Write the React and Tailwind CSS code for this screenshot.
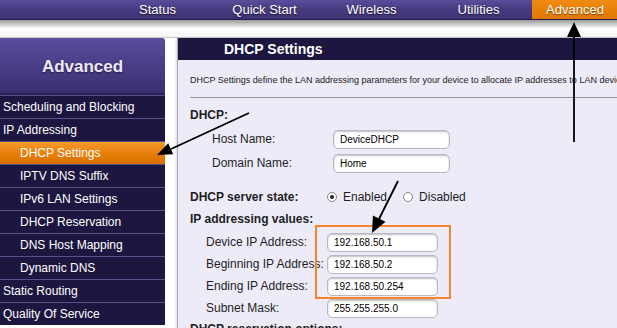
import React from "react";

const tabs = ["Status", "Quick Start", "Wireless", "Utilities"];

const menu = [
  { label: "Scheduling and Blocking" },
  { label: "IP Addressing" },
  { label: "DHCP Settings", sub: true, active: true },
  { label: "IPTV DNS Suffix", sub: true },
  { label: "IPv6 LAN Settings", sub: true },
  { label: "DHCP Reservation", sub: true },
  { label: "DNS Host Mapping", sub: true },
  { label: "Dynamic DNS", sub: true },
  { label: "Static Routing" },
  { label: "Quality Of Service" },
];

const TextBox = ({ value, w }) => (
  <div
    className={`${w} h-[19px] rounded-[5px] border border-[#b9b9c4] bg-white shadow-[inset_0_1px_2px_rgba(0,0,0,0.25)] px-[6px] flex items-center text-[10px] text-black`}
  >
    {value}
  </div>
);

const Radio = ({ checked, label }) => (
  <div className="flex items-center gap-[6px]">
    <div className="w-[10px] h-[10px] rounded-full border border-[#888] bg-white flex items-center justify-center">
      {checked && <div className="w-[4px] h-[4px] rounded-full bg-[#222]"></div>}
    </div>
    <span>{label}</span>
  </div>
);

export default function App() {
  return (
    <div
      className="relative w-[617px] h-[328px] overflow-hidden bg-white"
      style={{ fontFamily: '"Liberation Sans", Arial, sans-serif' }}
    >
      {/* Top nav */}
      <div className="h-[20px] flex justify-end bg-gradient-to-b from-[#5a4d9c] via-[#473a80] to-[#3f3375] border-b border-[#231b4a]">
        {tabs.map((t) => (
          <div
            key={t}
            className="w-[107px] flex items-center justify-center text-[13px] text-white [text-shadow:0_1px_1px_rgba(0,0,0,0.6)]"
          >
            {t}
          </div>
        ))}
        <div className="w-[85px] pl-[1px] flex items-center justify-center text-[13px] text-white bg-gradient-to-b from-[#f08a12] to-[#e07800] [text-shadow:0_1px_1px_rgba(0,0,0,0.5)]">
          Advanced
        </div>
      </div>

      {/* gap strip */}
      <div className="h-[18px] bg-gradient-to-b from-[#9a9a9a] via-[#ffffff] to-[#f4f4f4] border-b border-[#c9c9c9]"></div>

      <div className="flex gap-[12px]">
        {/* Sidebar */}
        <div className="w-[165px] shrink-0">
          <div className="h-[57px] pt-[2px] rounded-tr-[3px] bg-gradient-to-b from-[#5a4c9e] via-[#4a3d88] to-[#3b2f70] flex items-center justify-center text-[17px] font-bold text-[#eeeaf8] [text-shadow:0_1px_2px_rgba(0,0,0,0.5)] border-b-[2px] border-[#2a2158]">
            Advanced
          </div>
          {menu.map((m) => (
            <div
              key={m.label}
              className={`h-[23px] flex items-center text-[12px] text-white border-t border-[#58528c] ${
                m.sub ? "pl-[20px]" : "pl-[3px]"
              } ${
                m.active
                  ? "bg-gradient-to-b from-[#f59a2a] via-[#e8800a] to-[#d56f00]"
                  : "bg-[#1c1640]"
              }`}
            >
              {m.label}
            </div>
          ))}
        </div>

        {/* Content */}
        <div className="flex-1 border-l border-[#a8a8b8] shadow-[-1px_0_2px_rgba(0,0,0,0.15)]">
          <div className="h-[22px] bg-[#1c1641] flex items-center pl-[46px] text-[14px] font-bold text-white">
            DHCP Settings
          </div>
          <div className="h-[300px] bg-[#edebf8] pl-[12px] pt-[14px] text-[12px] text-[#1e1e1e] overflow-hidden">
            <div className="h-[12px] leading-[12px] text-[9px] whitespace-nowrap text-[#222]">
              DHCP Settings define the LAN addressing parameters for your device to allocate IP addresses to LAN devices.
            </div>
            <div className="mt-[11px] border-t border-[#9a9a9a]"></div>

            <div className="mt-[9px] h-[16px] flex items-center font-bold">DHCP:</div>
            <div className="mt-[4px] h-[24px] flex items-center pl-[22px]">
              <span className="w-[121px]">Host Name:</span>
              <TextBox value="DeviceDHCP" w="w-[117px]" />
            </div>
            <div className="h-[24px] flex items-center pl-[22px]">
              <span className="w-[121px]">Domain Name:</span>
              <TextBox value="Home" w="w-[117px]" />
            </div>

            <div className="mt-[14px] h-[16px] flex items-center">
              <span className="w-[137px] font-bold">DHCP server state:</span>
              <Radio checked label="Enabled" />
              <div className="w-[16px]"></div>
              <Radio label="Disabled" />
            </div>

            <div className="mt-[6px] h-[16px] flex items-center font-bold">IP addressing values:</div>
            <div className="mt-[4px]">
              {[
                ["Device IP Address:", "192.168.50.1"],
                ["Beginning IP Address:", "192.168.50.2"],
                ["Ending IP Address:", "192.168.50.254"],
                ["Subnet Mask:", "255.255.255.0"],
              ].map(([l, v]) => (
                <div key={l} className="h-[22px] flex items-center pl-[16px]">
                  <span className="w-[121px] whitespace-nowrap">{l}</span>
                  <TextBox value={v} w="w-[111px]" />
                </div>
              ))}
            </div>
            <div className="mt-[2px] h-[16px] flex items-center font-bold">DHCP reservation options:</div>
          </div>
        </div>
      </div>

      {/* Annotations */}
      <div className="absolute left-[315px] top-[225px] w-[136px] h-[74px] border-2 border-[#f5842a]"></div>
      <svg className="absolute inset-0 pointer-events-none" width="617" height="328" viewBox="0 0 617 328">
        <line x1="574" y1="142" x2="574" y2="34" stroke="#000" strokeWidth="1.8" />
        <polygon points="574,22 567,37 581,37" fill="#000" />
        <line x1="249" y1="113" x2="171" y2="149" stroke="#000" strokeWidth="1.8" />
        <polygon points="157,155 173.2,154.3 168.2,143.3" fill="#000" />
        <line x1="398" y1="181" x2="379" y2="219" stroke="#000" strokeWidth="1.8" />
        <polygon points="372,233 385.5,221.8 372.9,215.6" fill="#000" />
      </svg>
    </div>
  );
}
